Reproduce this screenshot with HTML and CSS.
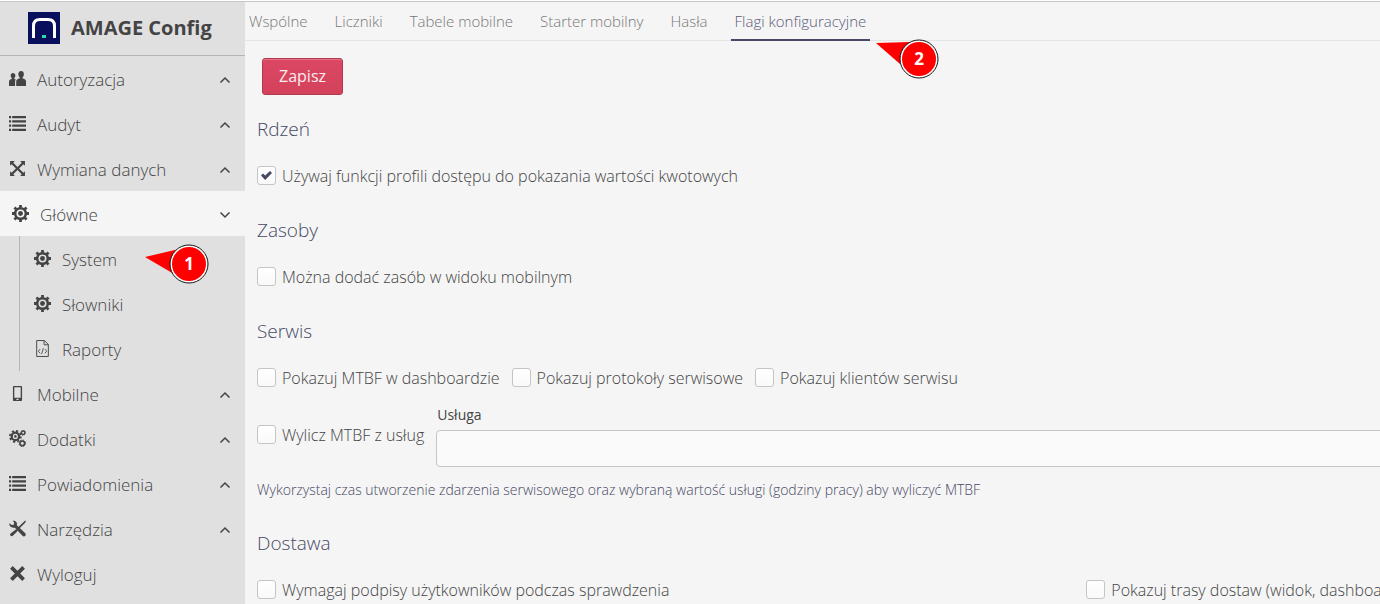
FILE: index.html
```html
<!DOCTYPE html>
<html lang="pl">
<head>
    <meta charset="UTF-8">
    <title>AMAGE Config</title>
    <link rel="stylesheet" href="styles.css">
</head>
<body>
<!-- icons -->
<svg class="defs" aria-hidden="true">
    <symbol id="i-users" viewBox="0 0 16 16">
        <path d="M11.4 1c1.6 0 2.6 1.2 2.6 2.9 0 1.2-.5 2.3-1.2 2.9v1.1c1.8.3 3.2 1.1 3.2 2.7V15H6.8v-4.4c0-1.600 1.400-2.400 3.200-2.700V6.800C9.300 6.200 8.800 5.100 8.800 3.900 8.800 2.200 9.800 1 11.400 1z"/>
        <path d="M3.800 2.800c1.300 0 2.200 1 2.200 2.400 0 1-.4 1.900-1 2.400v.9c.5.100 1 .3 1.400.5-.5.500-.7 1.100-.7 1.800V15H0v-4c0-1.400 1-2.200 2.600-2.500v-.9c-.6-.5-1-1.400-1-2.400 0-1.400.9-2.400 2.200-2.400z"/>
    </symbol>
    <symbol id="i-list" viewBox="0 0 16 16">
        <path d="M0 1h2v2H0zM3 1h13v2H3zM0 5h2v2H0zM3 5h13v2H3zM0 9h2v2H0zM3 9h13v2H3zM0 13h2v2H0zM3 13h13v2H3z"/>
    </symbol>
    <symbol id="i-exchange" viewBox="0 0 16 16">
        <path d="M1 1h4.500L4 2.600l4 4 4-4L10.500 1H15v4.500L13.500 4l-4 4 4 4 1.500-1.500V15h-4.500l1.500-1.500-4-4-4 4L5.500 15H1v-4.500L2.500 12l4-4-4-4L1 5.500z"/>
    </symbol>
    <symbol id="i-cog" viewBox="0 0 16 16">
        <circle cx="8" cy="8" r="5" fill="none" stroke="currentColor" stroke-width="2.400"/>
        <path stroke="currentColor" stroke-width="2.600" d="M8 0v2.500M8 13.500V16M0 8h2.500M13.500 8H16M2.300 2.300l1.800 1.800M11.900 11.900l1.800 1.800M2.300 13.700l1.800-1.800M11.900 4.100l1.800-1.800"/>
        <circle cx="8" cy="8" r="2.300"/>
    </symbol>
    <symbol id="i-file" viewBox="0 0 16 16">
        <path fill="none" stroke="currentColor" stroke-width=".9" d="M2.500.5h7.300l3.700 3.700v11.300h-11zM9.500.5v4h4"/>
        <path fill="none" stroke="currentColor" stroke-width=".8" d="M5.800 8.500l-1.800 2 1.800 2M10.200 8.500l1.800 2-1.800 2M8.800 7.800l-1.600 5.400"/>
    </symbol>
    <symbol id="i-mobile" viewBox="0 0 16 16">
        <path fill-rule="evenodd" d="M4.500 1h7a.8.8 0 0 1 .8.8v12.400a.8.8 0 0 1-.8.8h-7a.8.8 0 0 1-.8-.8V1.800a.8.8 0 0 1 .8-.8zM5 2v10h6V2zM7 13v1h2v-1z"/>
    </symbol>
    <symbol id="i-cogs" viewBox="0 0 16 16">
        <circle cx="6" cy="6" r="3.500" fill="none" stroke="currentColor" stroke-width="2.200"/>
        <circle cx="6" cy="6" r="5.200" fill="none" stroke="currentColor" stroke-width="1.600" stroke-dasharray="2.100 1.980"/>
        <circle cx="6" cy="6" r="1.200"/>
        <circle cx="13.300" cy="2.600" r="1.600" fill="none" stroke="currentColor" stroke-width="1.300"/>
        <circle cx="13.300" cy="2.600" r="2.300" fill="none" stroke="currentColor" stroke-width=".8" stroke-dasharray="1 .8"/>
        <circle cx="12.500" cy="12.500" r="2.200" fill="none" stroke="currentColor" stroke-width="1.500"/>
        <circle cx="12.500" cy="12.500" r="3.100" fill="none" stroke="currentColor" stroke-width=".9" stroke-dasharray="1.300 1.130"/>
    </symbol>
    <symbol id="i-tools" viewBox="0 0 16 16">
        <path d="M15.300.5l.7.700-1.200 1.900-5.200 5.200-1.200-1.200L13.500 2zM7 8.500L8.400 10 3.600 14.800c-.6.600-1.500.6-2.100 0s-.6-1.500 0-2.100z"/>
        <path d="M3.500.8c1.500-.4 3 .2 3.700 1.600.4.800.4 1.700.2 2.500l7.700 7.300c.8.800.9 1.900.2 2.700-.7.700-1.900.7-2.600-.1L5.500 7.200c-1.300.4-2.800.2-3.900-.8C.5 5.400.100 4.200.400 3L2.600 4.800l1.900-.4.400-1.800z"/>
    </symbol>
    <symbol id="i-close" viewBox="0 0 16 16">
        <path d="M3.500 1L8 5.500 12.500 1 15 3.500 10.500 8l4.500 4.500-2.500 2.500L8 10.500 3.500 15 1 12.500 5.500 8 1 3.500z"/>
    </symbol>
    <symbol id="i-up" viewBox="0 0 12 8">
        <path fill="none" stroke="currentColor" stroke-width="1.500" d="M1.500 6.500L6 2l4.500 4.500"/>
    </symbol>
    <symbol id="i-down" viewBox="0 0 12 8">
        <path fill="none" stroke="currentColor" stroke-width="1.500" d="M1.500 1.500L6 6l4.500-4.500"/>
    </symbol>
</svg>

<div class="app">
    <aside class="sidebar">
        <div class="brand">
            <svg class="logo" viewBox="0 0 32 32" aria-hidden="true">
                <path fill="#0a0f5c" d="M0 0h32v32H0z"/>
                <path fill="none" stroke="#fff" stroke-width="3" d="M5.500 26V14q0-6.500 6.500-6.500h8q6.500 0 6.500 6.500v12"/>
                <path fill="#1fe0a8" d="M14 23h4v3h-4z"/>
            </svg>
            <span>AMAGE Config</span>
        </div>
        <nav>
            <ul class="menu">
                <li><a href="#"><svg class="icon"><use href="#i-users"/></svg><span>Autoryzacja</span><svg class="arrow"><use href="#i-up"/></svg></a></li>
                <li><a href="#"><svg class="icon"><use href="#i-list"/></svg><span>Audyt</span><svg class="arrow"><use href="#i-up"/></svg></a></li>
                <li><a href="#"><svg class="icon"><use href="#i-exchange"/></svg><span>Wymiana danych</span><svg class="arrow"><use href="#i-up"/></svg></a></li>
                <li>
                    <a href="#" class="open"><svg class="icon"><use href="#i-cog"/></svg><span>Główne</span><svg class="arrow"><use href="#i-down"/></svg></a>
                    <ul class="submenu">
                        <li>
                            <a href="#"><svg class="icon"><use href="#i-cog"/></svg><span>System</span></a>
                            <div class="marker marker-system">
                                <svg viewBox="0 0 64 40" aria-hidden="true"><path d="M0 13l34-8v28z"/><circle class="halo" cx="44" cy="20" r="18"/><circle class="ring" cx="44" cy="20" r="19"/></svg>
                                <b>1</b>
                            </div>
                        </li>
                        <li><a href="#"><svg class="icon"><use href="#i-cog"/></svg><span>Słowniki</span></a></li>
                        <li><a href="#"><svg class="icon"><use href="#i-file"/></svg><span>Raporty</span></a></li>
                    </ul>
                </li>
                <li><a href="#"><svg class="icon"><use href="#i-mobile"/></svg><span>Mobilne</span><svg class="arrow"><use href="#i-up"/></svg></a></li>
                <li><a href="#"><svg class="icon"><use href="#i-cogs"/></svg><span>Dodatki</span><svg class="arrow"><use href="#i-up"/></svg></a></li>
                <li><a href="#"><svg class="icon"><use href="#i-list"/></svg><span>Powiadomienia</span><svg class="arrow"><use href="#i-up"/></svg></a></li>
                <li><a href="#"><svg class="icon"><use href="#i-tools"/></svg><span>Narzędzia</span><svg class="arrow"><use href="#i-up"/></svg></a></li>
                <li><a href="#"><svg class="icon"><use href="#i-close"/></svg><span>Wyloguj</span></a></li>
            </ul>
        </nav>
    </aside>

    <main class="content">
        <nav class="tabs">
            <a href="#">Wspólne</a>
            <a href="#">Liczniki</a>
            <a href="#">Tabele mobilne</a>
            <a href="#">Starter mobilny</a>
            <a href="#">Hasła</a>
            <a href="#" class="current">Flagi konfiguracyjne</a>
            <div class="marker marker-tab">
                <svg viewBox="0 0 64 40" aria-hidden="true"><path d="M1 4l34-1-10 22z"/><circle class="halo" cx="44" cy="20" r="18"/><circle class="ring" cx="44" cy="20" r="19"/></svg>
                <b>2</b>
            </div>
        </nav>

        <form class="flags">
            <button type="button" class="save">Zapisz</button>

            <h2>Rdzeń</h2>
            <div class="row">
                <label class="check"><input type="checkbox" checked>Używaj funkcji profili dostępu do pokazania wartości kwotowych</label>
            </div>

            <h2>Zasoby</h2>
            <div class="row">
                <label class="check"><input type="checkbox">Można dodać zasób w widoku mobilnym</label>
            </div>

            <h2>Serwis</h2>
            <div class="row">
                <label class="check"><input type="checkbox">Pokazuj MTBF w dashboardzie</label>
                <label class="check"><input type="checkbox">Pokazuj protokoły serwisowe</label>
                <label class="check"><input type="checkbox">Pokazuj klientów serwisu</label>
            </div>
            <div class="row service">
                <label class="check"><input type="checkbox">Wylicz MTBF z usług</label>
                <div class="field">
                    <label for="usluga">Usługa</label>
                    <input type="text" id="usluga">
                </div>
            </div>
            <p class="hint">Wykorzystaj czas utworzenie zdarzenia serwisowego oraz wybraną wartość usługi (godziny pracy) aby wyliczyć MTBF</p>

            <h2>Dostawa</h2>
            <div class="columns">
                <label class="check"><input type="checkbox">Wymagaj podpisy użytkowników podczas sprawdzenia</label>
                <label class="check"><input type="checkbox">Pokazuj trasy dostaw (widok, dashboard)</label>
            </div>
        </form>
    </main>
</div>
</body>
</html>
```
FILE: styles.css
```css
*{
    margin: 0;
    padding: 0;
    box-sizing: border-box;
}
body{
    font: 300 16px/24px "Open Sans", sans-serif;
    color: #444;
    background-color: #f5f5f5;
    overflow: hidden;
}
a{
    color: inherit;
    text-decoration: none;
}
ul{
    list-style: none;
}
.defs{
    display: none;
}
.app{
    display: flex;
    min-height: 100vh;
    border-top: 1px solid #fff;
}

/* sidebar */
.sidebar{
    flex: 0 0 245px;
    background-color: #e0e0e0;
    border-top: 1px solid #c5c5c5;
}
.brand{
    display: flex;
    align-items: center;
    gap: 11px;
    height: 54px;
    padding: 0 0 2px 28px;
    border-bottom: 1px solid #b5b5b5;
    font-size: 20px;
    font-weight: 700;
}
.logo{
    width: 32px;
    height: 32px;
}
.menu a{
    display: flex;
    align-items: center;
    height: 45px;
    padding: 0 14px 0 9px;
    font-size: 17px;
}
.menu a span{
    padding-top: 2px;
}
.menu .open{
    padding-left: 12px;
    background-color: #f5f5f5;
}
.icon{
    width: 17px;
    height: 17px;
    margin-right: 11px;
    fill: currentColor;
}
.arrow{
    width: 12px;
    height: 8px;
    margin-top: 2px;
    margin-left: auto;
}
.submenu{
    margin-left: 19px;
    border-left: 1px solid #b5b5b5;
}
.submenu li{
    position: relative;
}
.submenu a{
    padding-left: 14px;
}

/* numbered markers */
.marker{
    position: absolute;
    width: 64px;
    height: 40px;
    color: #fff;
}
.marker svg{
    display: block;
    fill: #f00;
}
.marker .halo{
    stroke: #fff;
    stroke-width: 2;
}
.marker .ring{
    fill: none;
    stroke: #111;
}
.marker b{
    position: absolute;
    top: 0;
    left: 24px;
    width: 40px;
    font-size: 17px;
    font-weight: 700;
    line-height: 40px;
    text-align: center;
}
.marker-system{
    top: 8px;
    left: 125px;
}
.marker-tab{
    top: 37px;
    left: 630px;
}

/* content */
.content{
    flex: 1;
    min-width: 0;
    border-top: 1px solid #c5c5c5;
}
.tabs{
    position: relative;
    display: flex;
    gap: 19px;
    height: 39px;
    border-bottom: 1px solid #e5e5e5;
    font-size: 15px;
    line-height: 38px;
    white-space: nowrap;
    color: #777;
}
.tabs a{
    height: 39px;
    padding: 0 4px;
}
.tabs .current{
    color: #5a5c78;
    border-bottom: 2px solid #474964;
}
.flags{
    padding: 17px 0 0 12px;
}
.save{
    display: block;
    height: 37px;
    margin-left: 5px;
    padding: 0 16px 2px;
    border: 1px solid #b2384e;
    border-radius: 3px;
    background: linear-gradient(#dc4863, #d3415b);
    box-shadow: inset 0 1px 0 #e67287;
    font: 400 16px/24px "Open Sans", sans-serif;
    color: #fbeef0;
}
h2{
    margin: 20px 0 21px;
    font-size: 19px;
    font-weight: 300;
    line-height: 28px;
    color: #474964;
}
.row{
    display: flex;
    gap: 12px;
    white-space: nowrap;
}
.check{
    display: flex;
    gap: 6px;
    height: 24px;
    line-height: 24px;
}
.row + h2{
    margin-top: 28px;
}
.check input{
    display: grid;
    place-items: center;
    flex: none;
    width: 19px;
    height: 19px;
    margin-top: 2px;
    appearance: none;
    border: 1px solid #c5c5c5;
    border-radius: 3px;
    background: linear-gradient(#fff, #f9f9f9);
}
.check input:checked::before{
    content: "";
    width: 11px;
    height: 9px;
    background-color: #474964;
    clip-path: polygon(0 50%, 18% 28%, 38% 50%, 82% 0, 100% 22%, 38% 100%);
}
.service{
    margin-top: 13px;
    align-items: center;
}
.field{
    flex: 1;
    min-width: 0;
    margin-right: -8px;
}
.field label{
    display: block;
    padding: 0 0 3px 1px;
    font-size: 14px;
    font-weight: 400;
    line-height: 24px;
}
.field input{
    display: block;
    width: 100%;
    height: 37px;
    padding: 0 8px;
    border: 1px solid #c5c5c5;
    border-radius: 4px;
    background-color: #fafafa;
    font: inherit;
}
.hint{
    margin-top: 11px;
    font-size: 14px;
    color: #474964;
}
.hint + h2{
    margin-top: 27px;
}
.columns{
    display: grid;
    grid-template-columns: 48fr 17fr;
    white-space: nowrap;
}
.columns .check{
    min-width: 0;
}
```
